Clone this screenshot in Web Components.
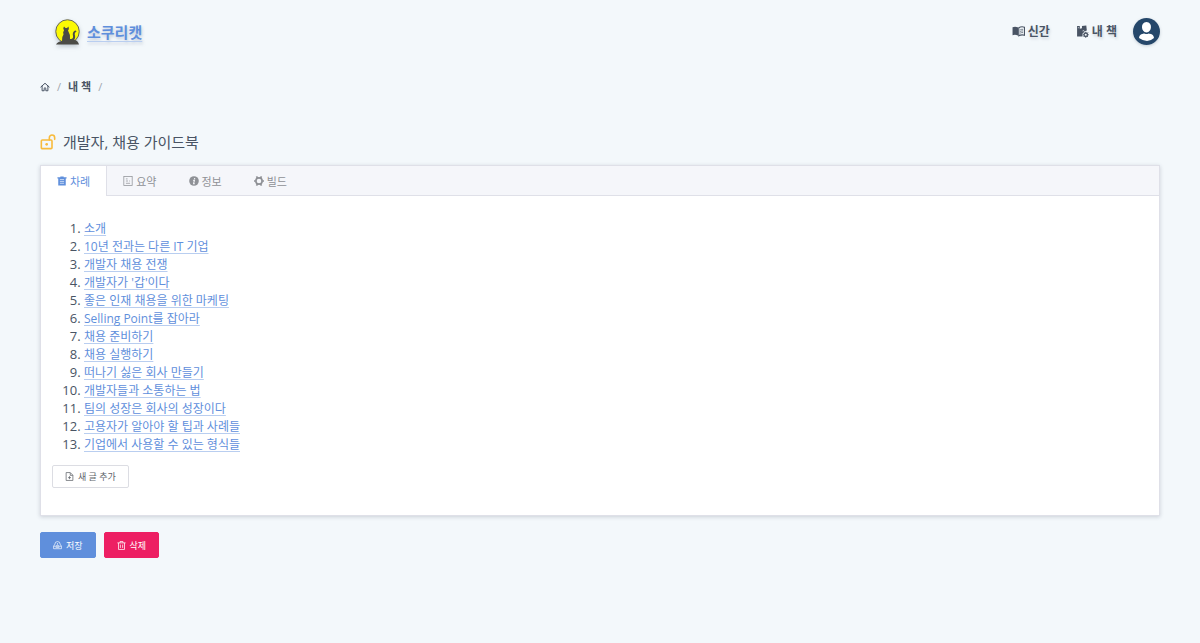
<!DOCTYPE html>
<html lang="ko">
<head>
<meta charset="utf-8">
<meta name="viewport" content="width=device-width, initial-scale=1">
<title>개발자, 채용 가이드북</title>
<style>
  :root {
    --bg: #f3f8fb;
    --text: #495464;
    --muted: #8f9196;
    --primary: #5f8fdc;
    --primary-soft: #b9cef0;
    --danger: #ed1f63;
    --border: #dfe0e8;
    --warn: #f8bb3c;
  }
  body {
    margin: 0;
    background: var(--bg);
    color: var(--text);
    font-family: "Open Sans", "Noto Sans CJK KR", sans-serif;
    font-size: 12px;
  }
</style>
</head>
<body>
<book-page>
  <site-header slot="header">
    <nav-link href="#new" icon="book">신간</nav-link>
    <nav-link href="#mine" icon="shelf">내 책</nav-link>
  </site-header>
  <bread-crumbs slot="crumbs">내 책</bread-crumbs>
  <book-title slot="title">개발자, 채용 가이드북</book-title>
  <tab-card>
    <tab-button slot="tabs" icon="clipboard" active>차례</tab-button>
    <tab-button slot="tabs" icon="summary">요약</tab-button>
    <tab-button slot="tabs" icon="info">정보</tab-button>
    <tab-button slot="tabs" icon="gear">빌드</tab-button>
    <chapter-list></chapter-list>
    <action-button icon="file">새 글 추가</action-button>
  </tab-card>
  <action-button slot="actions" icon="save" kind="primary">저장</action-button>
  <action-button slot="actions" icon="trash" kind="danger">삭제</action-button>
</book-page>

<script>
const ICONS = {
  book: `<path d="M1 4q6-2 10.500 1v15q-5-3-10.500-1z" fill="currentColor"/><path d="M12.500 5q5-3 10.500-1v15q-5-2-10.500 1z" fill="none" stroke="currentColor" stroke-width="2"/><path d="M15 9q3-1.500 5.500-1M15 12q3-1.500 5.500-1M15 15q3-1.500 5.500-1" fill="none" stroke="currentColor" stroke-width="1.300"/>`,
  shelf: `<path d="M2 2h5v5l4-1V2l8-1 1 9-5 2-3 4v5H2z" fill="currentColor"/><path d="M3.500 5h2M12 11l3-1" stroke="var(--bg)" stroke-width="1.200"/><circle cx="18" cy="18" r="3.200" fill="var(--bg)" stroke="currentColor" stroke-width="2.500"/><path d="M18 12.500v2M18 21.500v2M12.500 18h2M21.500 18h2M14 14l1.500 1.500M20.500 20.500L22 22M14 22l1.500-1.500M20.500 15.500L22 14" stroke="currentColor" stroke-width="1.800"/>`,
  home: `<path d="M2 12L12 3l10 9M5 10v11h5v-6q2-3 4 0v6h5V10" fill="none" stroke="currentColor" stroke-width="2.400" stroke-linejoin="round" stroke-linecap="round"/>`,
  unlock: `<rect x="2" y="9" width="16" height="13" rx="1.500" fill="none" stroke="currentColor" stroke-width="2.400"/><path d="M14 9V5.500a4 4 0 0 1 8 0V8" fill="none" stroke="currentColor" stroke-width="2.400" stroke-linecap="round"/><circle cx="10" cy="15.500" r="2" fill="currentColor"/>`,
  clipboard: `<path d="M1 3h7V1h8v2h7v3h-2v17H3V6H1z" fill="currentColor"/><path d="M7 8.500h10M7 13h10M7 17.500h10" stroke="#fff" stroke-width="1.500"/>`,
  summary: `<rect x="2" y="1" width="20" height="22" fill="none" stroke="currentColor" stroke-width="1.800"/><path d="M7 7h4M7 12h5M7 17.500h10M15 12h2" stroke="currentColor" stroke-width="1.800"/>`,
  info: `<circle cx="12" cy="12" r="11.500" fill="currentColor"/><path d="M13.500 5v3M10 10.500h3l-2 8h3" fill="none" stroke="#f5f6fa" stroke-width="2.600"/>`,
  gear: `<circle cx="12" cy="12" r="7.500" fill="none" stroke="currentColor" stroke-width="4"/><path d="M6 1l3 5M18 1l-3 5M6 23l3-5M18 23l-3-5M0 12h4M20 12h4" stroke="currentColor" stroke-width="4"/>`,
  file: `<path d="M3 1.500h11l7 7v14H3zM14 2v7h7M8 15h8M12 11v8" fill="none" stroke="currentColor" stroke-width="2"/>`,
  save: `<path d="M1.500 14h21v6.500h-21zM1.500 14L5 8.500a7 7 0 0 1 14 0l3.500 5.500M9 14a3 3 0 1 1 6 0M7 17h10" fill="none" stroke="currentColor" stroke-width="1.800"/><circle cx="12" cy="7.500" r="1.500" fill="currentColor"/>`,
  trash: `<path d="M1 5h22M8 5V1.500h8V5M4 5v17.500h16V5M9 9.500v9M15 9.500v9" fill="none" stroke="currentColor" stroke-width="2"/>`
};

const CHAPTERS = [
  '소개',
  '10년 전과는 다른 IT 기업',
  '개발자 채용 전쟁',
  "개발자가 '갑'이다",
  '좋은 인재 채용을 위한 마케팅',
  'Selling Point를 잡아라',
  '채용 준비하기',
  '채용 실행하기',
  '떠나기 싫은 회사 만들기',
  '개발자들과 소통하는 법',
  '팀의 성장은 회사의 성장이다',
  '고용자가 알아야 할 팁과 사례들',
  '기업에서 사용할 수 있는 형식들'
];

const icon = (name) => `<svg class="icon" viewBox="0 0 24 24" aria-hidden="true">${ICONS[name]}</svg>`;

class BaseElement extends HTMLElement {
  constructor() {
    super();
    this.attachShadow({ mode: 'open' });
  }

  connectedCallback() {
    this.shadowRoot.innerHTML = this.render();
  }
}

class BookPage extends BaseElement {
  render() {
    return `
      <style>
        :host { display: block; padding: 0 40px 40px; }
        main { display: flex; flex-direction: column; }
        .crumbs { padding: 14px 0 34px; }
        .actions { display: flex; gap: 8px; padding-top: 16px; }
      </style>
      <slot name="header"></slot>
      <main>
        <div class="crumbs"><slot name="crumbs"></slot></div>
        <slot name="title"></slot>
        <slot></slot>
        <div class="actions"><slot name="actions"></slot></div>
      </main>
    `;
  }
}

class SiteHeader extends BaseElement {
  render() {
    return `
      <style>
        :host { display: block; }
        header { display: flex; align-items: center; justify-content: space-between; height: 63px; }
        .brand {
          display: flex;
          align-items: center;
          gap: 7px;
          padding-left: 15px;
          color: var(--primary);
          font-size: 15px;
          font-weight: 700;
          line-height: 20px;
          text-decoration: none;
          text-shadow: 1px 2px 3px rgba(60, 80, 120, 0.25);
        }
        .brand span { text-decoration: underline 1px var(--primary-soft); text-underline-offset: 3px; text-decoration-skip-ink: none; }
        .brand svg { width: 25px; height: 26px; filter: drop-shadow(0 2px 2px rgba(60, 80, 100, 0.3)); }
        nav { display: flex; align-items: center; gap: 26px; }
        .profile {
          width: 27px;
          height: 27px;
          margin-left: -10px;
          padding: 0;
          border: 0;
          border-radius: 50%;
          background: none;
          box-shadow: 0 1px 3px rgba(60, 80, 100, 0.25);
        }
        .profile svg { display: block; width: 100%; height: 100%; }
      </style>
      <header>
        <a class="brand" href="#home">
          <svg viewBox="0 0 50 52" aria-hidden="true">
            <circle cx="25" cy="25" r="23.500" fill="#fbf903" stroke="#66665a" stroke-width="2"/>
            <path d="M2 51q3-6 12-7-1-8 3-13-2-5 1-8-3-5 0-8l3 3h3l3-3q2 5-1 8 5 8 4 17l2 0q5-1 4-6-2-8 4-11 3 0 3 2-5 3-3 8 1 7-2 8 8 2 10 10z" fill="#4b4b46"/>
          </svg>
          <span>소쿠리캣</span>
        </a>
        <nav>
          <slot></slot>
          <button class="profile" type="button" aria-label="프로필">
            <svg viewBox="0 0 54 54" aria-hidden="true">
              <circle cx="27" cy="27" r="27" fill="#25476a"/>
              <path d="M27 8c-13 0-11 21 0 21s13-21 0-21zM12 40c1-9 8-8 11-9q4 2 8 0c3 1 10 0 11 9q-13 12-30 0z" fill="#fff"/>
            </svg>
          </button>
        </nav>
      </header>
    `;
  }
}

class NavLink extends BaseElement {
  render() {
    return `
      <style>
        :host { display: block; }
        a {
          display: flex;
          align-items: center;
          gap: 3px;
          color: var(--text);
          font-size: 12px;
          font-weight: 600;
          line-height: 20px;
          text-decoration: none;
          text-shadow: 1px 2px 3px rgba(60, 80, 100, 0.2);
        }
        .icon { width: 13px; height: 13px; }
      </style>
      <a href="${this.getAttribute('href')}">${icon(this.getAttribute('icon'))}<span><slot></slot></span></a>
    `;
  }
}

class BreadCrumbs extends BaseElement {
  render() {
    return `
      <style>
        :host { display: block; }
        nav { display: flex; align-items: center; gap: 7px; font-size: 11px; line-height: 20px; color: #a0a6ae; }
        a { color: var(--text); font-weight: 600; text-decoration: none; }
        .icon { display: block; width: 10px; height: 10px; }
      </style>
      <nav aria-label="breadcrumb">
        <a href="#home" aria-label="홈">${icon('home')}</a>
        <span>/</span>
        <a href="#mine"><slot></slot></a>
        <span>/</span>
      </nav>
    `;
  }
}

class BookTitle extends BaseElement {
  render() {
    return `
      <style>
        :host { display: block; padding-bottom: 12px; }
        h1 { display: flex; align-items: center; gap: 7px; margin: 0; font-size: 15px; font-weight: 400; line-height: 22px; }
        .icon { width: 16px; height: 16px; color: var(--warn); }
      </style>
      <h1>${icon('unlock')}<span><slot></slot></span></h1>
    `;
  }
}

class TabCard extends BaseElement {
  render() {
    return `
      <style>
        :host {
          display: block;
          border: 1px solid var(--border);
          background: #fff;
          box-shadow: 0 1px 4px rgba(60, 70, 90, 0.22);
        }
        .tabs { display: flex; background: #f5f6fa; box-shadow: inset 0 -1px var(--border); }
        .body { padding: 23px 11px 27px; }
      </style>
      <div class="tabs" role="tablist"><slot name="tabs"></slot></div>
      <div class="body"><slot></slot></div>
    `;
  }
}

class TabButton extends BaseElement {
  render() {
    const active = this.hasAttribute('active');
    return `
      <style>
        :host { display: block; }
        button {
          display: flex;
          align-items: center;
          gap: 3px;
          height: 30px;
          padding: 0 16px;
          border: 0;
          background: none;
          color: var(--muted);
          font: inherit;
          font-size: 11px;
          cursor: pointer;
        }
        :host([active]) button { background: #fff; color: var(--primary); border-right: 1px solid var(--border); }
        .icon { width: 10px; height: 10px; }
      </style>
      <button type="button" role="tab" aria-selected="${active}">${icon(this.getAttribute('icon'))}<span><slot></slot></span></button>
    `;
  }
}

class ChapterList extends BaseElement {
  render() {
    const items = CHAPTERS.map((title, i) => `<li><a href="#chapter-${i + 1}">${title}</a></li>`).join('');
    return `
      <style>
        :host { display: block; padding-bottom: 12px; }
        ol { display: grid; grid-auto-rows: 18px; margin: 0; padding-left: 32px; line-height: 18px; }
        li::marker { font-size: 13px; }
        a {
          color: var(--primary);
          text-decoration: underline 1px var(--primary-soft);
          text-underline-offset: 2px;
          text-decoration-skip-ink: none;
        }
      </style>
      <ol>${items}</ol>
    `;
  }
}

class ActionButton extends BaseElement {
  render() {
    return `
      <style>
        :host { display: block; width: max-content; }
        button {
          display: flex;
          align-items: center;
          gap: 4px;
          height: 23px;
          padding: 0 12px;
          border: 1px solid #dcdde3;
          border-radius: 2px;
          background: #fff;
          color: #62656b;
          font: inherit;
          font-size: 9px;
          cursor: pointer;
        }
        :host([kind]) button { height: 26px; color: #fff; }
        :host([kind="primary"]) button { background: var(--primary); border-color: var(--primary); }
        :host([kind="danger"]) button { background: var(--danger); border-color: var(--danger); }
        .icon { width: 9px; height: 9px; }
      </style>
      <button type="button">${icon(this.getAttribute('icon'))}<span><slot></slot></span></button>
    `;
  }
}

customElements.define('book-page', BookPage);
customElements.define('site-header', SiteHeader);
customElements.define('nav-link', NavLink);
customElements.define('bread-crumbs', BreadCrumbs);
customElements.define('book-title', BookTitle);
customElements.define('tab-card', TabCard);
customElements.define('tab-button', TabButton);
customElements.define('chapter-list', ChapterList);
customElements.define('action-button', ActionButton);
</script>
</body>
</html>
